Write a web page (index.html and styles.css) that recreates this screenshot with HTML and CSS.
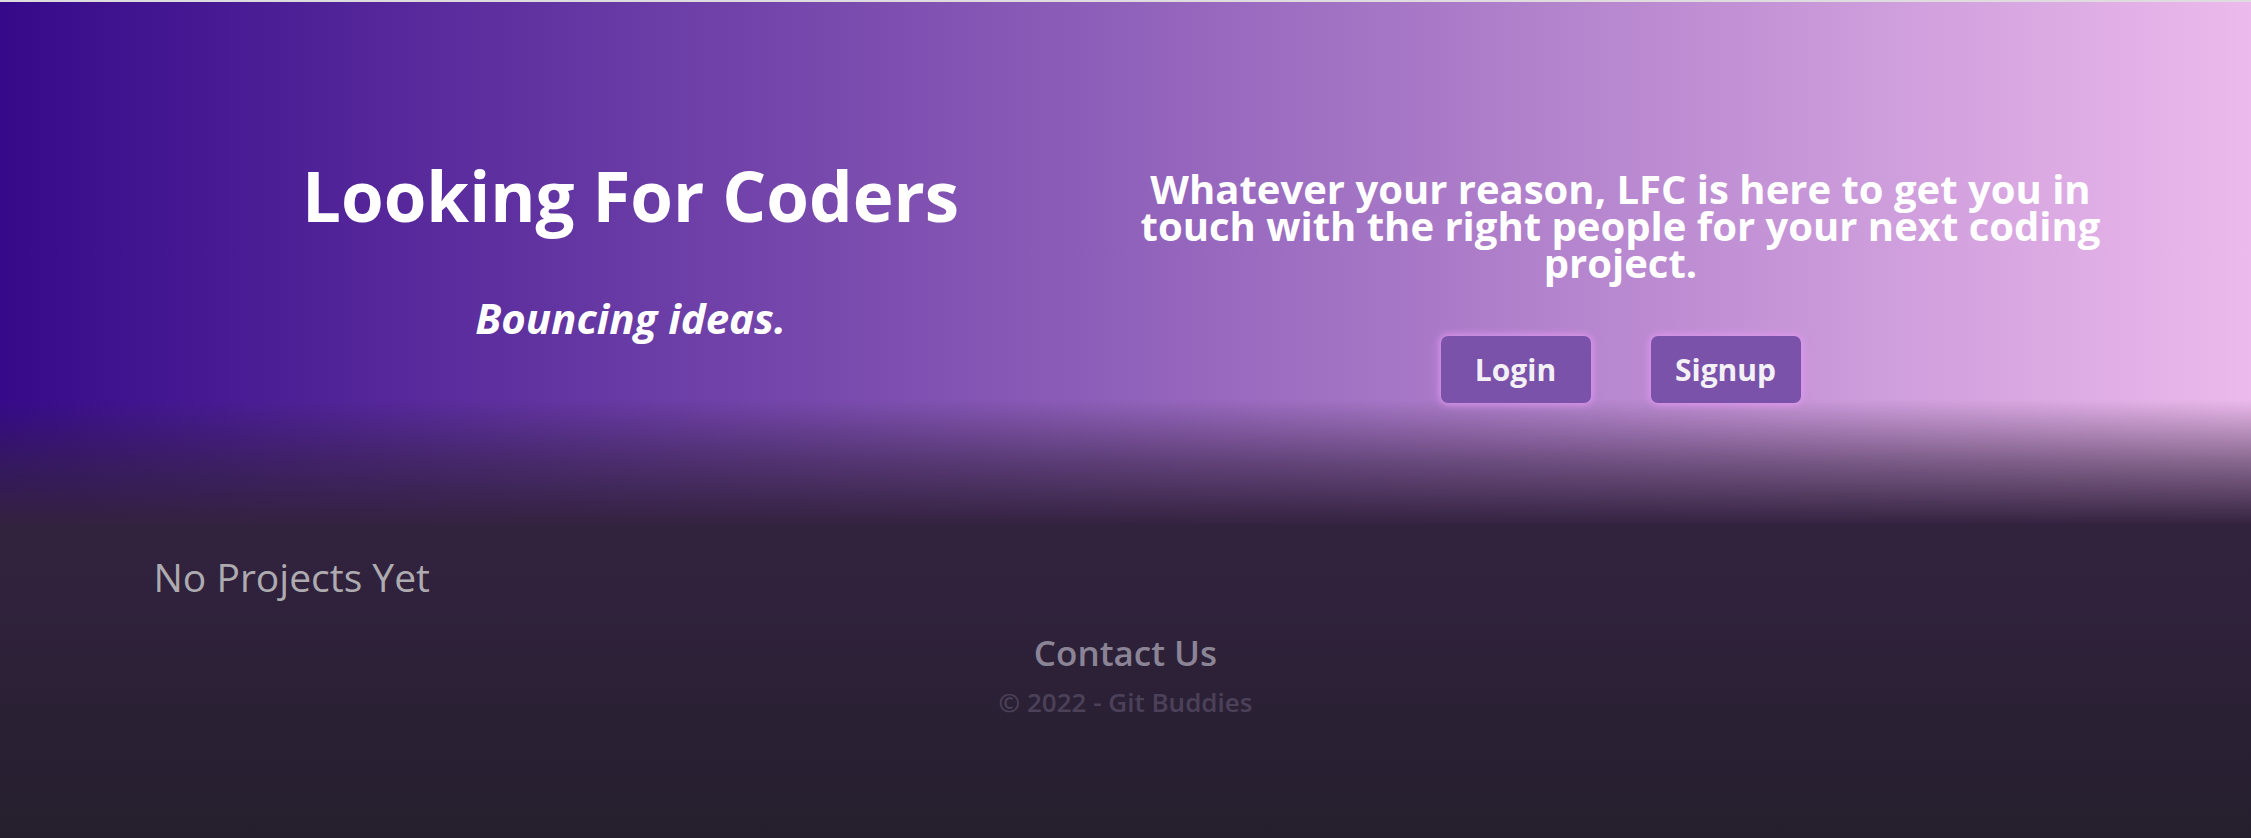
FILE: index.html
```html
<!DOCTYPE html>
<html lang="en">
<head>
<meta charset="utf-8">
<title>Looking For Coders</title>
<link rel="stylesheet" href="styles.css">
</head>
<body>
<div class="topline"></div>
<header class="hero">
  <div class="container hero-row">
    <div class="hero-col hero-left">
      <h1 class="title">Looking For Coders</h1>
      <h2 class="tagline">Bouncing ideas.</h2>
    </div>
    <div class="hero-col hero-right">
      <p class="pitch">Whatever your reason, LFC is here to get you in touch with the right people for your next coding project.</p>
      <div class="actions">
        <a class="btn" href="#">Login</a>
        <a class="btn" href="#">Signup</a>
      </div>
    </div>
  </div>
</header>
<main class="container projects">
  <h2 class="empty">No Projects Yet</h2>
</main>
<footer class="footer">
  <h3 class="contact">Contact Us</h3>
  <p class="copy">© 2022 - Git Buddies</p>
</footer>
</body>
</html>
```

FILE: styles.css
```css
html, body {
  margin: 0;
  padding: 0;
}

body {
  min-height: 838px;
  font-family: "Open Sans", "Noto Sans", sans-serif;
  background: linear-gradient(to bottom, #33223f 0px, #31223e 560px, #251f2d 838px);
  color: #ffffff;
}

.topline {
  height: 2px;
  background: #dedcde;
}

.container {
  width: 1980px;
  margin: 0 auto;
  box-sizing: border-box;
}

.hero {
  padding: 151px 0 122px;
  background:
    linear-gradient(to bottom, rgba(51, 34, 63, 0) 76%, rgba(51, 34, 63, 0.55) 88%, #33223f 100%),
    linear-gradient(90deg, #36098a 0%, #9061ba 50%, #ecbaec 100%);
}

.hero-row {
  display: grid;
  grid-template-columns: 1fr 1fr;
  align-items: start;
}

.hero-col {
  display: flex;
  flex-direction: column;
  align-items: center;
  text-align: center;
}

.title {
  margin: 0;
  font-size: 69px;
  line-height: 84px;
  font-weight: 700;
}

.tagline {
  margin: 57px 0 0;
  font-size: 42px;
  line-height: 48px;
  font-weight: 700;
  font-style: italic;
}

.hero-right {
  padding-top: 17px;
}

.pitch {
  margin: 0;
  max-width: 976px;
  font-size: 40px;
  line-height: 37px;
  font-weight: 700;
}

.actions {
  display: flex;
  gap: 60px;
  margin-top: 55px;
}

.btn {
  display: flex;
  align-items: center;
  justify-content: center;
  width: 150px;
  height: 67px;
  box-sizing: border-box;
  background: #7b52aa;
  border-radius: 7px;
  box-shadow: 0 0 7px 2px rgba(226, 152, 240, 0.85);
  color: #f4f1f6;
  font-size: 30px;
  font-weight: 700;
  text-decoration: none;
}

.projects {
  padding: 28px 15px 0 18px;
}

.empty {
  margin: 0;
  font-size: 39px;
  line-height: 47px;
  font-weight: 500;
  color: #adabaf;
}

.footer {
  display: flex;
  flex-direction: column;
  align-items: center;
  padding-top: 32px;
}

.contact {
  margin: 0;
  font-size: 35px;
  line-height: 42px;
  font-weight: 600;
  color: #8b8496;
}

.copy {
  margin: 13px 0 0;
  font-size: 26px;
  line-height: 31px;
  font-weight: 600;
  color: #4b4159;
}
```
